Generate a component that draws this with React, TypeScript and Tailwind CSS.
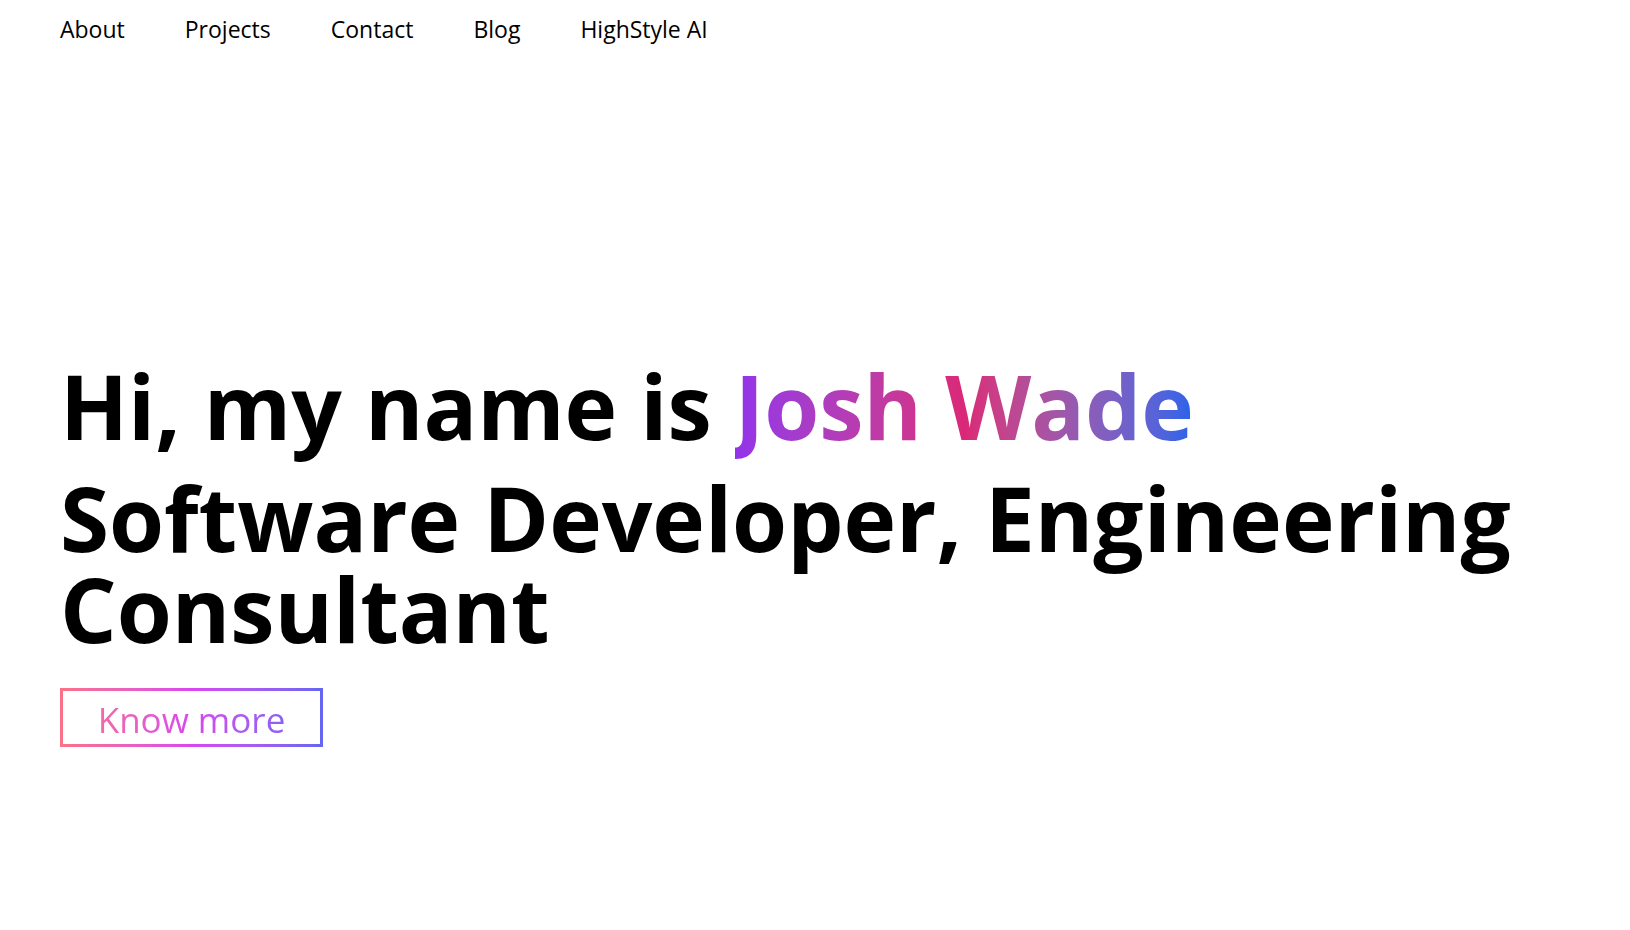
export default function App() {
  const links = ['About', 'Projects', 'Contact', 'Blog', 'HighStyle AI'];

  return (
    <div className="min-h-screen bg-white text-black" style={{ fontFamily: '"Open Sans", "Noto Sans", sans-serif' }}>
      <nav className="flex gap-[60px] pl-[60px] pt-[12px] text-[23px] leading-[34px]">
        {links.map((l) => (
          <a key={l} href="#" className="text-black">
            {l}
          </a>
        ))}
      </nav>

      <main className="pl-[60px] pt-[315px]">
        <h1 className="text-[89px] font-bold leading-[89px]">
          Hi, my name is{' '}
          <span className="bg-gradient-to-r from-[#9333ea] via-[#db2777] to-[#2563eb] bg-clip-text text-transparent">
            Josh Wade
          </span>
        </h1>
        <h2 className="mt-[22px] text-[89px] font-bold leading-[91px]">
          Software Developer, Engineering Consultant
        </h2>
        <div className="mt-[34px] inline-block bg-gradient-to-r from-[#fb7185] via-[#d946ef] to-[#6366f1] p-[3px]">
          <div className="w-[257px] bg-white">
            <span className="block w-full bg-gradient-to-r from-[#fb7185] via-[#d946ef] to-[#6366f1] bg-clip-text pt-[4px] text-center text-[35px] leading-[49px] text-transparent">
              Know more
            </span>
          </div>
        </div>
      </main>
    </div>
  );
}
